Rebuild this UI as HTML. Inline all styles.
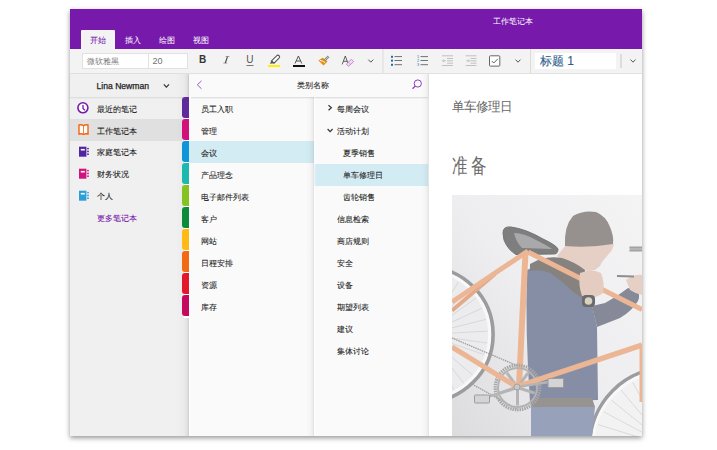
<!DOCTYPE html>
<html><head><meta charset="utf-8">
<style>
*{margin:0;padding:0;box-sizing:border-box}
html,body{width:717px;height:450px;background:#fff;overflow:hidden;font-family:"Liberation Sans",sans-serif;color:#262626}
div,svg{position:absolute}
#win{left:70px;top:9px;width:572px;height:427px;background:#fff;box-shadow:0 2px 5px rgba(0,0,0,.42)}
#title{left:70px;top:9px;width:572px;height:40px;background:#7719AA}
.t{margin-top:1px;font-size:8px;line-height:10px;white-space:nowrap;color:#1a1a1a;-webkit-text-stroke-width:0.08px}
.w{color:#fff;-webkit-text-stroke-width:0!important}
#tab0{left:81px;top:30px;width:34px;height:19px;background:#F3F3F3;border-radius:1px 1px 0 0}
#ribbon{left:70px;top:49px;width:572px;height:25px;background:#F3F3F3;border-bottom:1px solid #E0E0E0}
.box{background:#fff;border:1px solid #E1E1E1}
#nb{left:70px;top:74px;width:119px;height:362px;background:#F0F0F0}
#sec{left:189px;top:74px;width:125px;height:362px;background:#FAFAFA}
#pg{left:314px;top:74px;width:114px;height:362px;background:#FAFAFA}
#content{left:428px;top:74px;width:214px;height:362px;background:#fff}
.sel{background:#D3EBF3}
.tabc{left:182px;width:7px;height:21px;border-radius:3px 0 0 3px}
</style></head><body>
<div id="win"></div>
<div id="title"></div>
<div class="t w" style="left:493px;top:15px;font-size:8.3px">工作笔记本</div>
<div id="tab0"></div>
<div class="t" style="left:90px;top:35px;color:#7719AA">开始</div>
<div class="t w" style="left:125px;top:35px">插入</div>
<div class="t w" style="left:159px;top:35px">绘图</div>
<div class="t w" style="left:193px;top:35px">视图</div>

<div id="ribbon"></div>
<div class="box" style="left:82px;top:53px;width:106px;height:16px"></div>
<div style="left:148px;top:54px;width:1px;height:14px;background:#E1E1E1"></div>
<div class="t" style="left:87px;top:56px;color:#777;-webkit-text-stroke-width:0">微软雅黑</div>
<div class="t" style="left:152.5px;top:55px;color:#707070;font-size:9px;-webkit-text-stroke-width:0">20</div>

<div id="nb"></div>
<div id="sec"></div>
<div id="pg"></div>
<div id="content"></div>

<!-- notebook header -->
<div style="left:70px;top:74px;width:119px;height:23px;background:#F0F0F0;box-shadow:0 1px 1.5px rgba(0,0,0,.1)"></div>
<div class="t" style="left:96.5px;top:80px;font-size:8.6px;color:#1e1e1e;-webkit-text-stroke-width:0.25px">Lina Newman</div>
<!-- sections/pages header -->
<div style="left:189px;top:74px;width:239px;height:23px;background:#FAFAFA;box-shadow:0 1px 1.5px rgba(0,0,0,.14)"></div>
<div class="t" style="left:297px;top:80px">类别名称</div>

<!-- notebooks -->
<div style="left:70px;top:119px;width:112px;height:22px;background:#E0E0E0"></div>
<div class="t" style="left:97px;top:104px">最近的笔记</div>
<div class="t" style="left:97px;top:126px">工作笔记本</div>
<div class="t" style="left:97px;top:147px">家庭笔记本</div>
<div class="t" style="left:97px;top:169px">财务状况</div>
<div class="t" style="left:97px;top:191px">个人</div>
<div class="t" style="left:97px;top:212.5px;color:#7719AA">更多笔记本</div>

<!-- section tabs -->
<div style="left:176px;top:74px;width:13px;height:362px;background:linear-gradient(to right,rgba(0,0,0,0) 0,rgba(0,0,0,.025) 8px,rgba(0,0,0,.06) 11px,rgba(0,0,0,.12) 12.5px,rgba(0,0,0,.1) 13px)"></div>
<div style="left:189px;top:97px;width:2px;height:339px;background:linear-gradient(to right,#fff,#FAFAFA)"></div>
<div style="left:184px;top:97px;width:5px;height:221px;background:#fff"></div>
<div class="tabc" style="top:97px;background:#5F2B9C"></div>
<div class="tabc" style="top:119px;background:#D20F7B"></div>
<div class="tabc" style="top:141px;background:#0F96DA"></div>
<div class="tabc" style="top:163px;background:#1CB9AE"></div>
<div class="tabc" style="top:185px;background:#86C220"></div>
<div class="tabc" style="top:207px;background:#0C8B3A"></div>
<div class="tabc" style="top:229px;background:#FDBB14"></div>
<div class="tabc" style="top:251px;background:#F26A13"></div>
<div class="tabc" style="top:273px;background:#E4162C"></div>
<div class="tabc" style="top:295px;background:#C6085F"></div>

<!-- sections -->
<div class="sel" style="left:189px;top:141px;width:125px;height:22px"></div>
<div class="t" style="left:201px;top:104px">员工入职</div>
<div class="t" style="left:201px;top:126px">管理</div>
<div class="t" style="left:201px;top:148px">会议</div>
<div class="t" style="left:201px;top:170px">产品理念</div>
<div class="t" style="left:201px;top:192px">电子邮件列表</div>
<div class="t" style="left:201px;top:214px">客户</div>
<div class="t" style="left:201px;top:236px">网站</div>
<div class="t" style="left:201px;top:258px">日程安排</div>
<div class="t" style="left:201px;top:280px">资源</div>
<div class="t" style="left:201px;top:302px">库存</div>

<!-- pages -->
<div class="sel" style="left:314px;top:164px;width:114px;height:22px"></div>
<div class="t" style="left:337px;top:104px">每周会议</div>
<div class="t" style="left:337px;top:126px">活动计划</div>
<div class="t" style="left:343px;top:148px">夏季销售</div>
<div class="t" style="left:343px;top:170px">单车修理日</div>
<div class="t" style="left:343px;top:192px">齿轮销售</div>
<div class="t" style="left:337px;top:214px">信息检索</div>
<div class="t" style="left:337px;top:236px">商店规则</div>
<div class="t" style="left:337px;top:258px">安全</div>
<div class="t" style="left:337px;top:280px">设备</div>
<div class="t" style="left:337px;top:302px">期望列表</div>
<div class="t" style="left:337px;top:324px">建议</div>
<div class="t" style="left:337px;top:346px">集体讨论</div>

<!-- content -->
<div style="left:306px;top:97px;width:8px;height:339px;background:linear-gradient(to right,rgba(0,0,0,0) 0,rgba(0,0,0,.02) 4px,rgba(0,0,0,.05) 6.5px,rgba(0,0,0,.11) 8px)"></div>
<div style="left:314px;top:97px;width:2px;height:339px;background:linear-gradient(to right,rgba(255,255,255,.7),rgba(255,255,255,0))"></div>
<div style="left:421px;top:74px;width:8px;height:362px;background:linear-gradient(to right,rgba(0,0,0,0) 0,rgba(0,0,0,.02) 4px,rgba(0,0,0,.05) 6.5px,rgba(0,0,0,.13) 8px)"></div>
<div style="left:535px;top:53px;width:81px;height:16px;background:#fff"></div>
<div class="t" style="left:540px;top:53px;font-size:12px;line-height:14px;color:#2D5C8C;-webkit-text-stroke-width:0.12px">标题 1</div>
<div class="t" style="left:452px;top:97.5px;font-size:12px;line-height:14px;color:#666;-webkit-text-stroke-width:0;transform-origin:0 0;transform:scale(1.01,1.05)">单车修理日</div>
<div class="t" style="left:452px;top:153.3px;font-size:18px;line-height:22px;color:#6b6b6b;letter-spacing:4.4px;-webkit-text-stroke-width:0;transform-origin:0 0;transform:scale(0.84,1.14)">准备</div>
<svg style="left:452px;top:195px" width="190" height="241" viewBox="452 195 190 241">
 <defs>
  <linearGradient id="bg" x1="1" y1="0" x2="0" y2="1"><stop offset="0" stop-color="#F4F4F5"/><stop offset="0.5" stop-color="#EEEEF0"/><stop offset="1" stop-color="#DCDCDE"/></linearGradient>
 </defs>
 <rect x="452" y="195" width="190" height="241" fill="url(#bg)"/>
 <!-- rear wheel -->
 <g fill="none">
  <circle cx="425.7" cy="334.4" r="63" fill="#ECECEE" stroke="none"/><circle cx="425.7" cy="334.4" r="67.2" stroke="#9A9C9E" stroke-width="4"/>
  <circle cx="425.7" cy="334.4" r="64" stroke="#F8F8F8" stroke-width="3.2"/>
  <g stroke="#C2C2C2" stroke-width="0.5">
   <path d="M426.2 331.4 L436.5 273.3 M426.8 331.6 L447.9 276.5 M427.3 331.9 L458.6 281.8 M427.7 332.2 L468.0 289.1 M428.1 332.6 L475.9 298.0 M428.4 333.1 L481.9 308.2 M428.6 333.7 L485.9 319.4 M428.7 334.2 L487.6 331.2 M428.7 334.8 L487.1 343.0 M428.5 335.4 L484.3 354.6 M428.3 335.9 L479.4 365.4 M428.0 336.4 L472.5 375.1 M427.5 336.8 L463.9 383.3 M427.1 337.1 L453.8 389.6 M426.5 337.3 L442.8 394.0"/>
  </g>
 </g>
 <!-- front wheel -->
 <g fill="none">
  <circle cx="668" cy="446" r="74" fill="#F2F2F3" stroke="none"/><circle cx="668" cy="446" r="78" stroke="#9A9C9E" stroke-width="4"/>
  <circle cx="668" cy="446" r="75" stroke="#F8F8F8" stroke-width="3"/>
  <g stroke="#C2C2C2" stroke-width="0.5">
   <path d="M668.0 446.0 L595.4 438.4 M668.0 446.0 L598.2 424.7 M668.0 446.0 L603.5 411.7 M668.0 446.0 L611.3 400.1 M668.0 446.0 L621.1 390.1 M668.0 446.0 L632.6 382.2 M668.0 446.0 L645.4 376.6 M668.0 446.0 L659.1 373.5"/>
  </g>
 </g>
 <!-- chain -->
 <path d="M452 338 L518 366 M470 383 L517 409" stroke="#A09C98" stroke-width="1.3" stroke-dasharray="1.5 0.8" fill="none"/>
 <!-- saddle -->
 <path d="M503 233 Q503 226 511 227 Q526 229 543 239 Q556 245 558 249 Q558 254 554 254 L516 254.5 Q508 250 504 240 Z" fill="#7E7E7E" stroke="#747474" stroke-width="1"/>
 <path d="M514 233 Q524 233 536 240 Q548 246 552 249 L522 248 Q516 242 514 233 Z" fill="#A9A9AB"/>
 <!-- jacket body -->
 <path d="M527 270 Q538 264 552 265 Q570 272 580 285 L584 298 L592 305 L597 327 L598 400 L530 402 Q525 330 527 270 Z" fill="#868EA6"/>
 <!-- far sleeve darker -->
 <path d="M592 306 L605 303 Q618 296 628 288 L636 290 Q641 294 638 301 Q632 311 620 318 L597 327 Z" fill="#868A98"/>
 <!-- face / neck -->
 <path d="M557 256 L566 245 L614 244 L612 250 L607 256 L602 262 L600 266 L595 270 L588 271 L578 269 L566 263 Z" fill="#E6CFC4"/>
 <!-- hat -->
 <path d="M565 246 Q564 226 573 216 Q583 210 596 212 Q606 216 610 227 Q614 236 613 244 Q590 248 565 246 Z" fill="#96918F"/>
 <!-- scarf -->
 <path d="M530 264 L540 259 Q552 256 562 258 Q575 262 585 270 L586 300 Q578 296 572 291 Q562 281 550 273 Q540 269 530 271 Z" fill="#86827F"/>
 <!-- top tube -->
 <path d="M528 252 L642 309.5" stroke="#ECB695" stroke-width="5" stroke-linecap="butt"/>
 <!-- hand on tube -->
 <path d="M580 273 Q592 268 601 273 Q605 283 603 293 Q597 298 590 297 L582 296 Q578 285 580 273 Z" fill="#E4CCC0"/>
 <!-- watch -->
 <rect x="582" y="295" width="13" height="12" rx="4" fill="#6A6A70"/>
 <circle cx="588.5" cy="301" r="3.8" fill="#D8D2BE"/>
 <!-- right hand -->
 <path d="M626 280 Q634 274 642 275 L642 295 Q636 294 630 290 Z" fill="#E6CFC4"/>
 <!-- handlebar bits -->
 <path d="M629.5 249 H642" stroke="#B5B5B5" stroke-width="4"/><path d="M629.5 247 H642 M629.5 251 H642" stroke="#8C8C8C" stroke-width="0.8"/>
 <path d="M617 276 L634 276.5" stroke="#8E8E8E" stroke-width="2"/>
 <!-- belt + jeans -->
 <path d="M531 398 L592 398 L595 407 L531 407 Z" fill="#979390"/>
 <path d="M531 407 L595 407 L592 436 L531 436 Z" fill="#97A2BA"/>
 <!-- seat stays -->
 <path d="M495 274 L452 310.5" stroke="#E3AA8A" stroke-width="4"/><path d="M528 251 L452 302" stroke="#ECB695" stroke-width="5"/>
 <!-- seat tube -->
 <path d="M525.5 252 L519 386" stroke="#ECB695" stroke-width="6"/>
 <!-- chainring -->
 <circle cx="517.5" cy="387.5" r="22.3" fill="none" stroke="#A6A6A6" stroke-width="3.2" stroke-dasharray="1.5 0.9"/>
 <circle cx="517.5" cy="387.5" r="19.5" fill="none" stroke="#B3B3B3" stroke-width="2"/>
 <path d="M517.5 387.5 L517.5 405.5 M517.5 387.5 L500.4 393.1 M517.5 387.5 L506.9 372.9 M517.5 387.5 L528.1 372.9 M517.5 387.5 L534.6 393.1" stroke="#B5B5B5" stroke-width="3"/>
 <!-- chain stay -->
 <path d="M452 347 L517 387" stroke="#ECB695" stroke-width="5"/>
 <!-- down tube -->
 <path d="M519 386 L642 345" stroke="#ECB695" stroke-width="5.5"/>
 <!-- cranks & pedals -->
 <path d="M517 387 L482 399" stroke="#B5B5B5" stroke-width="2.5"/>
 <rect x="474.5" y="395" width="15" height="8" rx="1" fill="#D4D4D4" stroke="#9C9C9C" stroke-width="1"/>
 <path d="M517 387 L555 381" stroke="#B5B5B5" stroke-width="2.5"/>
 <rect x="548" y="378.5" width="15.5" height="9" rx="1" fill="#D4D4D4" stroke="#9C9C9C" stroke-width="1"/>
 <circle cx="517" cy="387" r="3" fill="#C8C8C8" stroke="#999" stroke-width="0.8"/>
 <!-- head tube -->
 <path d="M641 345 L641 402" stroke="#ECB695" stroke-width="3"/>
</svg>

<svg style="left:0;top:0" width="717" height="450" viewBox="0 0 717 450">
 <!-- ribbon separators -->
 <rect x="382.5" y="49" width="1" height="24" fill="#DCDCDC"/>
 <rect x="530" y="49" width="1" height="24" fill="#DCDCDC"/>
 <rect x="620.5" y="54" width="1" height="14" fill="#C8C8C8"/>
 <!-- B I U -->
 <text x="199" y="63.3" font-family="Liberation Sans" font-weight="bold" font-size="10" fill="#333">B</text>
 <path d="M227.5 56.6 L225.3 63" stroke="#444" stroke-width="1.1" fill="none"/><path d="M225.6 56.5 H229.4 M223.4 63.1 H227.2" stroke="#666" stroke-width="0.6" fill="none"/>
 <text x="246.3" y="63.3" font-family="Liberation Sans" font-size="10" fill="#555">U</text>
 <rect x="246.5" y="65" width="7" height="1" fill="#777"/>
 <!-- highlighter -->
 <path d="M271.6 60.8 L276.6 55.8 Q278 54.6 279.2 55.8 Q280.2 57 279 58.2 L274 63.2 Z" fill="#fff" stroke="#555" stroke-width="1.1"/>
 <path d="M270 63.7 L271.3 60.5 L274.2 63.3 Z" fill="#555"/>
 <rect x="268" y="65" width="12" height="2" fill="#FFF000"/>
 <!-- font color -->
 <path d="M295 63.5 L298.4 56 L301.8 63.5 M296.3 61 H300.5" fill="none" stroke="#444" stroke-width="0.9"/>
 <rect x="293" y="65" width="12" height="2" fill="#111"/>
 <!-- format painter -->
 <path d="M318.4 60.4 L323.6 65.4 L327.5 61.5 L322.6 57.8 Z" fill="#E0900E"/>
 <path d="M319.8 60.3 Q322.5 60.8 325.2 62.6" fill="none" stroke="#fff" stroke-width="0.9"/>
 <path d="M324.6 60.3 L328.6 56.4" stroke="#8C8C8C" stroke-width="2.4"/>
 <path d="M325 60 L328.4 56.7" stroke="#D0D0D0" stroke-width="0.8"/>
 <!-- clear formatting -->
 <path d="M342.2 64.4 L345.3 56 L348.4 64.4 M343.4 61.3 H347.2" fill="none" stroke="#444" stroke-width="0.85" stroke-linejoin="miter"/>
 <polygon points="346.33,63.95 351.53,59.27 353.67,61.65 348.47,66.33" fill="#EFDDF3" stroke="#C07BD0" stroke-width="0.85"/>
 <path d="M350.55 64.46 L348.41 62.08" stroke="#C07BD0" stroke-width="0.6"/>
 <!-- chevrons -->
 <path d="M368.3 59.6 L370.8 62.2 L373.3 59.6" fill="none" stroke="#555" stroke-width="1"/>
 <path d="M515.5 59.6 L518 62.2 L520.5 59.6" fill="none" stroke="#555" stroke-width="1"/>
 <path d="M630.5 59.6 L633 62.2 L635.5 59.6" fill="none" stroke="#555" stroke-width="1"/>
 <!-- bullets -->
 <rect x="391" y="55.8" width="2" height="2" fill="#1C6FA8"/>
 <rect x="391" y="59.6" width="2" height="2" fill="#1C6FA8"/>
 <rect x="391" y="63.8" width="2" height="2" fill="#1C6FA8"/>
 <path d="M394.5 56.6 H402 M394.5 60.5 H402 M394.5 64.7 H402" stroke="#727272" stroke-width="1"/>
 <!-- numbering -->
 <text x="417" y="58.3" font-family="Liberation Sans" font-size="3.8" fill="#1C6FA8">1</text>
 <text x="417" y="62.2" font-family="Liberation Sans" font-size="3.8" fill="#1C6FA8">2</text>
 <text x="417" y="66.4" font-family="Liberation Sans" font-size="3.8" fill="#1C6FA8">3</text>
 <path d="M420.5 56.6 H428 M420.5 60.5 H428 M420.5 64.7 H428" stroke="#727272" stroke-width="1"/>
 <!-- outdent -->
 <path d="M442 55.8 H453 M447 58.5 H453 M447 60.8 H453 M447 63.2 H453 M442 65.5 H453" stroke="#BBB" stroke-width="0.9"/>
 <path d="M446 60.8 H442.5 M444 59.3 L442.5 60.8 L444 62.3" stroke="#BBB" stroke-width="0.9" fill="none"/>
 <!-- indent -->
 <path d="M465.7 55.8 H476.5 M470.5 58.5 H476.5 M470.5 60.8 H476.5 M470.5 63.2 H476.5 M465.7 65.5 H476.5" stroke="#BBB" stroke-width="0.9"/>
 <path d="M466 60.8 H469.5 M468 59.3 L469.5 60.8 L468 62.3" stroke="#BBB" stroke-width="0.9" fill="none"/>
 <!-- checkbox -->
 <rect x="489.5" y="55.8" width="10.3" height="10.3" rx="0.8" fill="#fff" stroke="#666" stroke-width="1"/>
 <path d="M491.8 61 L493.8 63 L497.8 58.8" fill="none" stroke="#555" stroke-width="0.9"/>
 <!-- notebook header chevron -->
 <path d="M163.8 84.4 L166.4 87.2 L169 84.4" fill="none" stroke="#333" stroke-width="1.15"/>
 <!-- back arrow -->
 <path d="M201.5 80.8 L197.3 84.8 L201.5 88.8" fill="none" stroke="#9048C4" stroke-width="0.9"/>
 <!-- search -->
 <circle cx="417.8" cy="83.5" r="3.6" fill="none" stroke="#8A3DC0" stroke-width="1"/>
 <path d="M415.2 86.1 L412.5 88.8" stroke="#8A3DC0" stroke-width="1.3"/>
 <!-- notebook icons -->
 <circle cx="82.9" cy="107.8" r="5" fill="#fff" stroke="#7719AA" stroke-width="1.6"/>
 <path d="M83 105 V108.5 L85 110.2" fill="none" stroke="#7719AA" stroke-width="1.3"/>
 <path d="M79 125 Q81.5 124.3 83.5 125.8 Q85.5 124.3 88 125 V134 Q85.5 133.3 83.5 134.3 Q81.5 133.3 79 134 Z" fill="#fff" stroke="#F7630C" stroke-width="1.4"/>
 <path d="M83.5 125.8 V134" stroke="#F7630C" stroke-width="0.8"/>
 <rect x="79" y="146.7" width="7.4" height="10" fill="#5125A0"/>
 <rect x="80.8" y="148.9" width="4" height="1.6" fill="#fff"/>
 <circle cx="88" cy="148.6" r="0.9" fill="#5125A0"/><circle cx="88" cy="151.4" r="0.9" fill="#5125A0"/><circle cx="88" cy="154.2" r="0.9" fill="#5125A0"/>
 <rect x="79" y="168.7" width="7.4" height="10" fill="#D1137F"/>
 <rect x="80.8" y="170.9" width="4" height="1.6" fill="#fff"/>
 <circle cx="88" cy="170.6" r="0.9" fill="#D1137F"/><circle cx="88" cy="173.4" r="0.9" fill="#D1137F"/><circle cx="88" cy="176.2" r="0.9" fill="#D1137F"/>
 <rect x="79" y="190.7" width="7.4" height="10" fill="#2A9FD8"/>
 <rect x="80.8" y="192.9" width="4" height="1.6" fill="#fff"/>
 <circle cx="88" cy="192.6" r="0.9" fill="#2A9FD8"/><circle cx="88" cy="195.4" r="0.9" fill="#2A9FD8"/><circle cx="88" cy="198.2" r="0.9" fill="#2A9FD8"/>
 <!-- page chevrons -->
 <path d="M328.5 105.3 L331.4 107.8 L328.5 110.3" fill="none" stroke="#333" stroke-width="1.15"/>
 <path d="M327.6 129 L330.1 131.7 L332.6 129" fill="none" stroke="#333" stroke-width="1.15"/>
</svg>
</body></html>
